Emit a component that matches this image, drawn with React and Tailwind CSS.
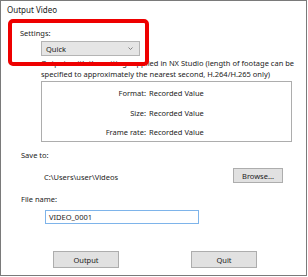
import React from 'react';

const rows = [
  ['Format:', 'Recorded Value'],
  ['Size:', 'Recorded Value'],
  ['Frame rate:', 'Recorded Value'],
];

export default function App() {
  return (
    <div className="relative w-[308px] h-[277px] bg-white text-[#1b1b1b] text-[7.5px] leading-[10px] font-['Noto_Sans',sans-serif]">
      <div className="w-[307px] h-[276px] border border-[#7a7a7a] flex flex-col">
        {/* title */}
        <div className="pl-[6px] pt-[4px] h-[18px] text-[8px]">Output Video</div>

        <div className="pl-[19px] mt-[9px]">Settings:</div>
        <div className="ml-[40px] mt-[3px] w-[99px] h-[15px] bg-[#e5e5e5] border border-[#b4b4b4] flex items-center justify-between pl-[4px] pr-[6px]">
          <span>Quick</span>
          <svg width="5" height="3" viewBox="0 0 5 3">
            <path d="M0.5 0.5 L2.5 2.5 L4.5 0.5" fill="none" stroke="#6a6a6a" strokeWidth="0.8" />
          </svg>
        </div>

        <div className="ml-[40px] mt-[2px] whitespace-nowrap">
          <div>Outputs with the settings applied in NX Studio (length of footage can be</div>
          <div className="mt-[1px]">specified to approximately the nearest second, H.264/H.265 only)</div>
        </div>

        {/* recorded values */}
        <div className="ml-[40px] mt-[2px] w-[251px] h-[61px] border border-[#adadad] grid grid-cols-[104px_1fr] content-start pt-[6px] gap-y-[9.5px]">
          {rows.map(([label, value]) => (
            <React.Fragment key={label}>
              <div className="text-right">{label}</div>
              <div className="pl-[3px]">{value}</div>
            </React.Fragment>
          ))}
        </div>

        <div className="pl-[20px] mt-[8px]">Save to:</div>
        <div className="flex items-center justify-between ml-[43px] mr-[23px] mt-[8px]">
          <span className="mt-[2px]">C:\Users\user\Videos</span>
          <button className="w-[50px] h-[15px] bg-[#e1e1e1] border border-[#adadad] flex items-center justify-center">
            Browse...
          </button>
        </div>

        <div className="pl-[20px] mt-[11px]">File name:</div>
        <div className="ml-[44px] mt-[6px] w-[154px] h-[14px] border border-[#7eb4ea] flex items-center pl-[3px]">
          VIDEO_0001
        </div>

        <div className="flex ml-[52px] mt-[27px] gap-[72px]">
          <button className="w-[66px] h-[17px] bg-[#e1e1e1] border border-[#adadad] flex items-center justify-center">
            Output
          </button>
          <button className="w-[66px] h-[17px] bg-[#e1e1e1] border border-[#adadad] flex items-center justify-center">
            Quit
          </button>
        </div>
      </div>

      {/* highlight annotation */}
      <div className="absolute left-[8px] top-[19px] w-[141px] h-[47px] border-[4px] border-[#ee0000] rounded-[5px]" />
    </div>
  );
}
